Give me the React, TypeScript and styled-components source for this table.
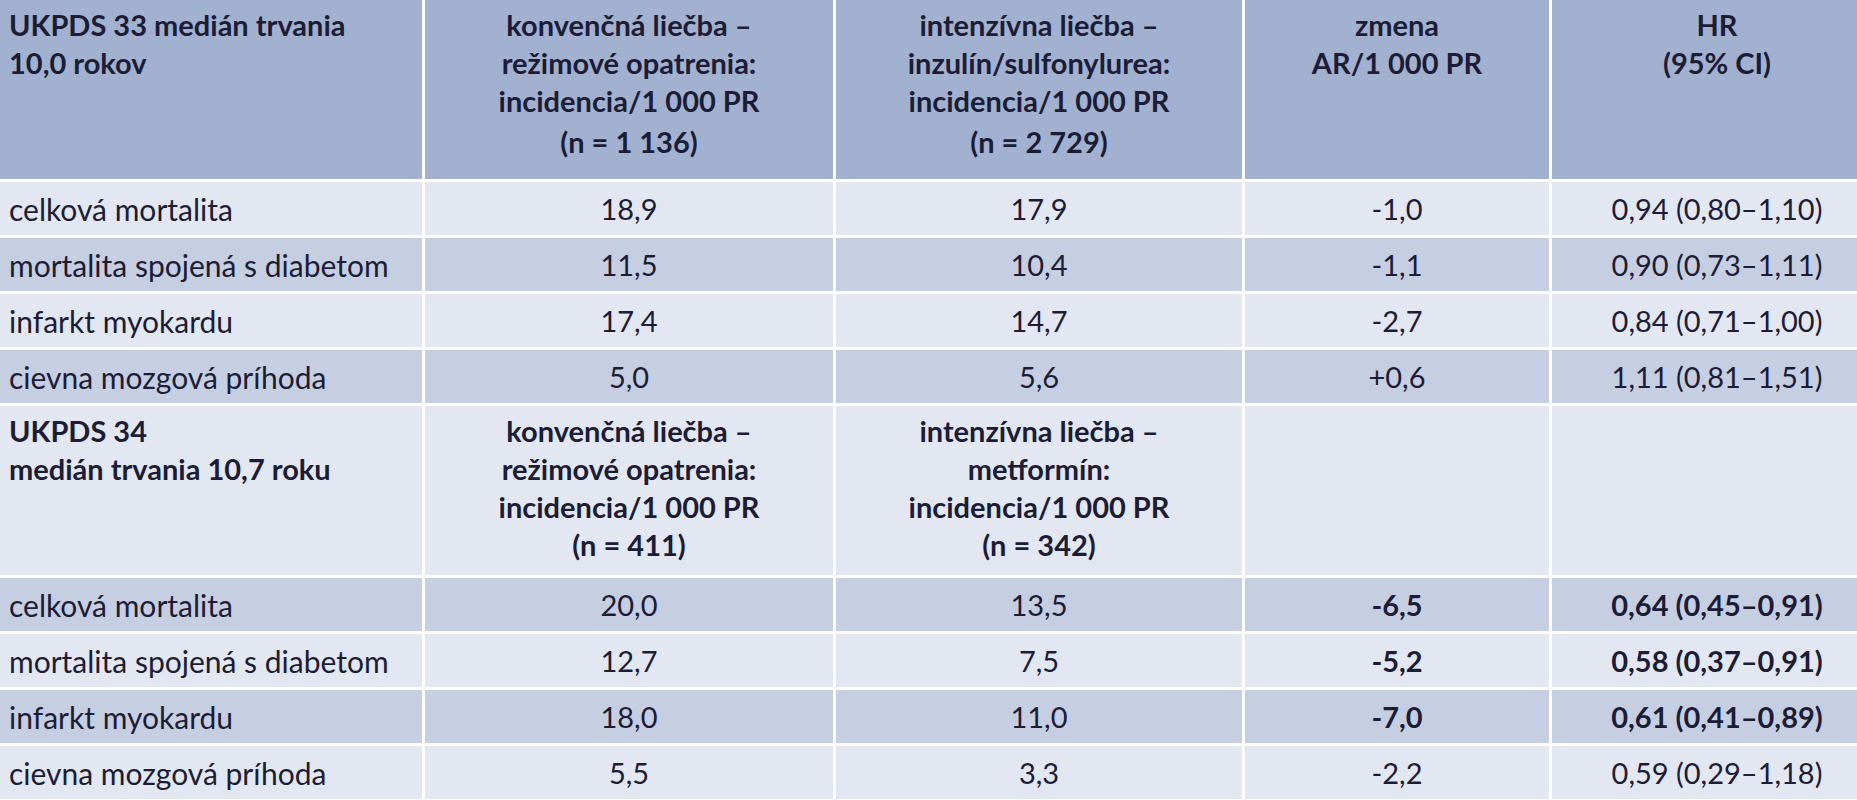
import React from 'react';
import styled, { createGlobalStyle } from 'styled-components';

const GlobalStyle = createGlobalStyle`
  html, body {
    margin: 0;
    padding: 0;
    background: #fff;
    overflow: hidden;
  }
`;

type Tone = 'head' | 'light' | 'mid';

const tones: Record<Tone, string> = {
  head: '#a1b1cf',
  light: '#e2e7f1',
  mid: '#c6cee2',
};

// the last column runs past the right edge of the picture
const Table = styled.div`
  display: grid;
  grid-template-columns: 422px 408px 406px 304px 330px;
  grid-template-rows: 179px repeat(4, 53px) 169px repeat(4, 53px);
  gap: 3px;
  width: 1882px;
  background: #fff;
  font-family: Lato, 'Liberation Sans', sans-serif;
  color: #1c1c36;
`;

const HeadCell = styled.div<{ $tone: Tone; $first?: boolean }>`
  background: ${(p) => tones[p.$tone]};
  padding: 6px 10px 0 ${(p) => (p.$first ? '9px' : '10px')};
  text-align: ${(p) => (p.$first ? 'left' : 'center')};
  font-size: 29px;
  font-weight: 700;
  line-height: 38px;
`;

const HeadLine = styled.div<{ $gap?: boolean }>`
  margin-top: ${(p) => (p.$gap ? '3px' : '0')};
  white-space: nowrap;
`;

const Cell = styled.div<{ $tone: Tone; $first?: boolean; $bold?: boolean }>`
  display: flex;
  align-items: center;
  justify-content: ${(p) => (p.$first ? 'flex-start' : 'center')};
  padding-left: ${(p) => (p.$first ? '9px' : '0')};
  background: ${(p) => tones[p.$tone]};
  font-size: ${(p) => (p.$first ? '30px' : '29px')};
  font-weight: ${(p) => (p.$bold ? 700 : 400)};
  white-space: nowrap;
`;

type Row = {
  label: string;
  conv: string;
  intens: string;
  change: string;
  hr: string;
  bold?: boolean;
};

const study33: Row[] = [
  { label: 'celková mortalita', conv: '18,9', intens: '17,9', change: '-1,0', hr: '0,94 (0,80–1,10)' },
  { label: 'mortalita spojená s diabetom', conv: '11,5', intens: '10,4', change: '-1,1', hr: '0,90 (0,73–1,11)' },
  { label: 'infarkt myokardu', conv: '17,4', intens: '14,7', change: '-2,7', hr: '0,84 (0,71–1,00)' },
  { label: 'cievna mozgová príhoda', conv: '5,0', intens: '5,6', change: '+0,6', hr: '1,11 (0,81–1,51)' },
];

const study34: Row[] = [
  { label: 'celková mortalita', conv: '20,0', intens: '13,5', change: '-6,5', hr: '0,64 (0,45–0,91)', bold: true },
  { label: 'mortalita spojená s diabetom', conv: '12,7', intens: '7,5', change: '-5,2', hr: '0,58 (0,37–0,91)', bold: true },
  { label: 'infarkt myokardu', conv: '18,0', intens: '11,0', change: '-7,0', hr: '0,61 (0,41–0,89)', bold: true },
  { label: 'cievna mozgová príhoda', conv: '5,5', intens: '3,3', change: '-2,2', hr: '0,59 (0,29–1,18)' },
];

function DataRows({ rows, startTone }: { rows: Row[]; startTone: Tone }) {
  const other: Tone = startTone === 'light' ? 'mid' : 'light';
  return (
    <>
      {rows.map((r, i) => {
        const tone = i % 2 === 0 ? startTone : other;
        return (
          <React.Fragment key={r.label}>
            <Cell $tone={tone} $first>{r.label}</Cell>
            <Cell $tone={tone}>{r.conv}</Cell>
            <Cell $tone={tone}>{r.intens}</Cell>
            <Cell $tone={tone} $bold={r.bold}>{r.change}</Cell>
            <Cell $tone={tone} $bold={r.bold}>{r.hr}</Cell>
          </React.Fragment>
        );
      })}
    </>
  );
}

export default function App() {
  return (
    <>
      <GlobalStyle />
      <Table>
        <HeadCell $tone="head" $first>
          <HeadLine>UKPDS 33 medián trvania</HeadLine>
          <HeadLine>10,0 rokov</HeadLine>
        </HeadCell>
        <HeadCell $tone="head">
          <HeadLine>konvenčná liečba –</HeadLine>
          <HeadLine>režimové opatrenia:</HeadLine>
          <HeadLine>incidencia/1 000 PR</HeadLine>
          <HeadLine $gap>(n = 1 136)</HeadLine>
        </HeadCell>
        <HeadCell $tone="head">
          <HeadLine>intenzívna liečba –</HeadLine>
          <HeadLine>inzulín/sulfonylurea:</HeadLine>
          <HeadLine>incidencia/1 000 PR</HeadLine>
          <HeadLine $gap>(n = 2 729)</HeadLine>
        </HeadCell>
        <HeadCell $tone="head">
          <HeadLine>zmena</HeadLine>
          <HeadLine>AR/1 000 PR</HeadLine>
        </HeadCell>
        <HeadCell $tone="head">
          <HeadLine>HR</HeadLine>
          <HeadLine>(95% CI)</HeadLine>
        </HeadCell>

        <DataRows rows={study33} startTone="light" />

        <HeadCell $tone="light" $first>
          <HeadLine>UKPDS 34</HeadLine>
          <HeadLine>medián trvania 10,7 roku</HeadLine>
        </HeadCell>
        <HeadCell $tone="light">
          <HeadLine>konvenčná liečba –</HeadLine>
          <HeadLine>režimové opatrenia:</HeadLine>
          <HeadLine>incidencia/1 000 PR</HeadLine>
          <HeadLine>(n = 411)</HeadLine>
        </HeadCell>
        <HeadCell $tone="light">
          <HeadLine>intenzívna liečba –</HeadLine>
          <HeadLine>metformín:</HeadLine>
          <HeadLine>incidencia/1 000 PR</HeadLine>
          <HeadLine>(n = 342)</HeadLine>
        </HeadCell>
        <HeadCell $tone="light" />
        <HeadCell $tone="light" />

        <DataRows rows={study34} startTone="mid" />
      </Table>
    </>
  );
}
